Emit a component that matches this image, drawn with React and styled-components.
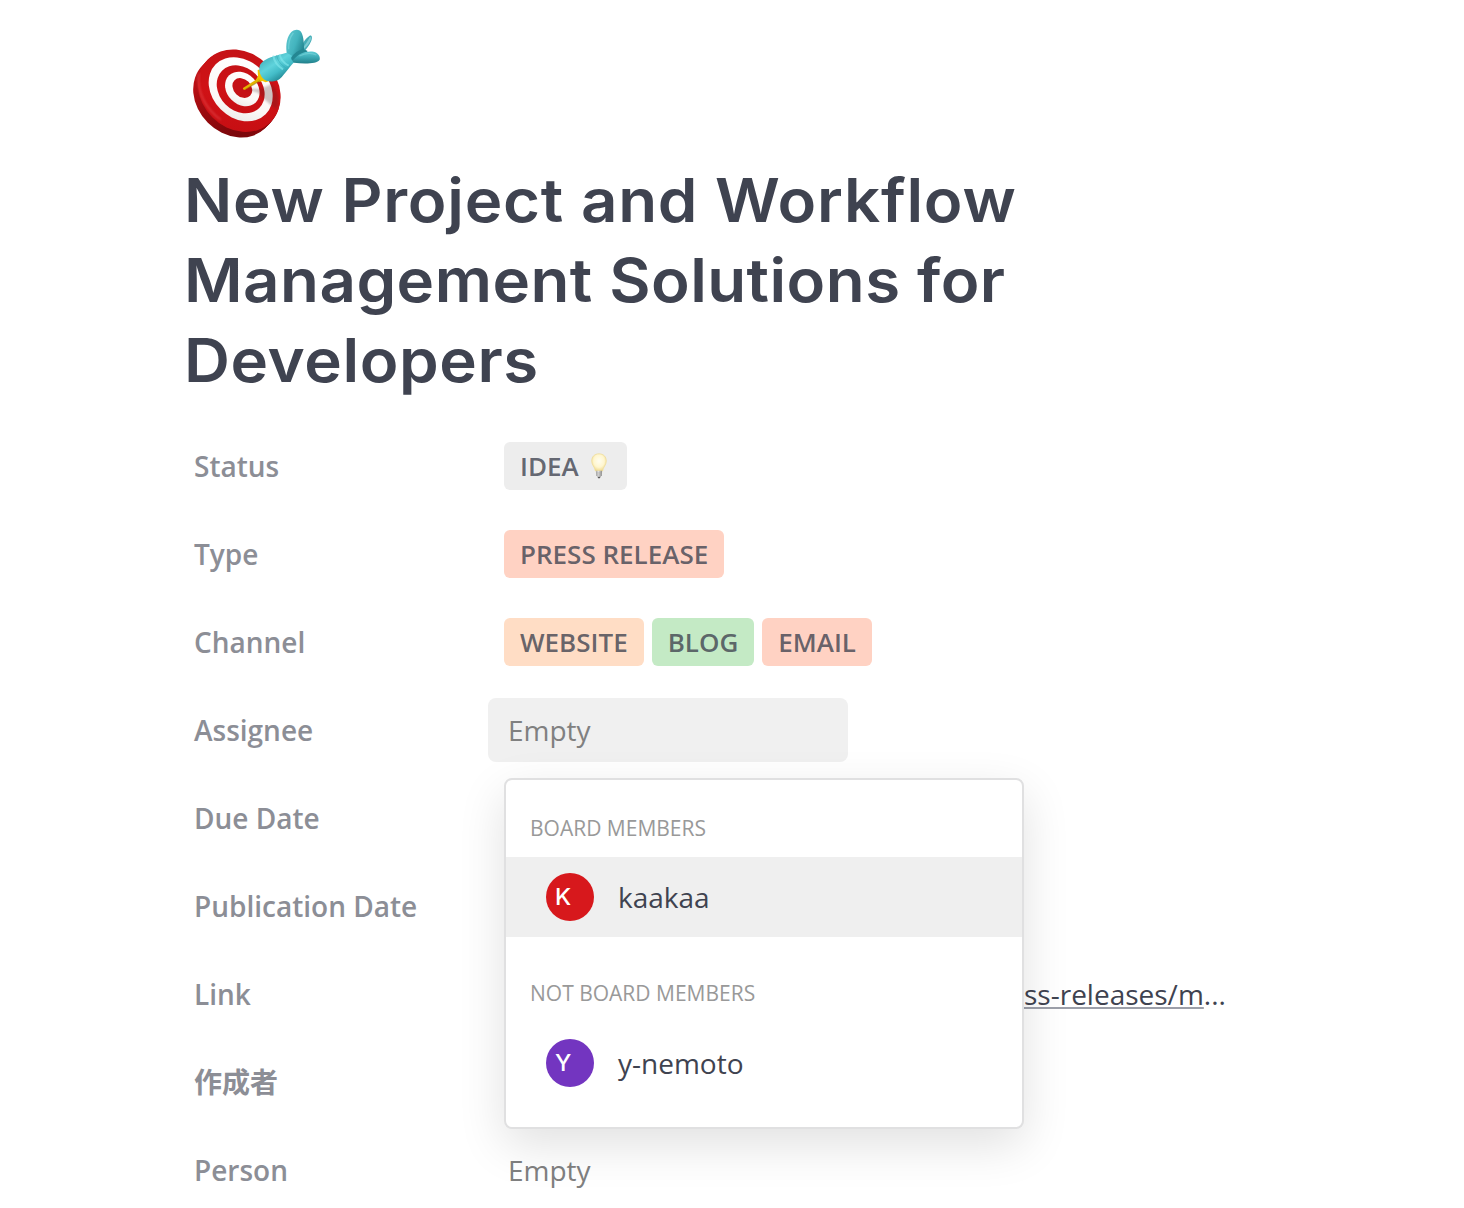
import React from "react";
import styled, { createGlobalStyle } from "styled-components";

const GlobalStyle = createGlobalStyle`
  *, *::before, *::after { box-sizing: border-box; }
  body {
    margin: 0;
    background: #ffffff;
    color: #3f4350;
    font-family: "Open Sans", "Noto Sans CJK JP", sans-serif;
    overflow: hidden;
  }
`;

const Card = styled.main`
  height: 1208px;
  padding: 20px 186px 0;
  overflow: hidden;
`;

const CardIcon = styled.div`
  display: flex;
  margin: 0 0 10px -6px;
`;

const Title = styled.h1`
  display: flex;
  flex-direction: column;
  margin: 0 0 34px;
  font: 600 60px/80px Inter, sans-serif;
  color: #3f4350;
`;

const TitleLine = styled.span`
  margin-left: -2.3px;
  white-space: nowrap;
  letter-spacing: ${(p) => p.$tracking}px;
  transform: scaleX(1.06);
  transform-origin: 0 50%;
`;

const Properties = styled.section`
  display: flex;
  flex-direction: column;
  gap: 24px;
`;

const Property = styled.div`
  display: flex;
  align-items: center;
  height: 64px;
`;

const Label = styled.div`
  flex: 0 0 302px;
  padding-left: 8px;
  font-size: 28px;
  line-height: 38px;
  font-weight: 600;
  color: #8c8e96;
`;

const Value = styled.div`
  position: relative;
  display: flex;
  align-items: center;
  gap: 8px;
  height: 64px;
  padding: 0 16px;
`;

const Tag = styled.span`
  display: inline-flex;
  align-items: center;
  gap: 7px;
  height: 48px;
  padding: 0 16px;
  border-radius: 6px;
  background: ${(p) => p.$bg};
  color: rgba(63, 67, 80, 0.8);
  font-size: 26px;
  line-height: 36px;
  font-weight: 600;
  white-space: nowrap;
`;

const PersonField = styled.div`
  width: 360px;
  height: 64px;
  margin-left: -16px;
  padding-left: 20px;
  border-radius: 8px;
  background: ${(p) => (p.$active ? "#f0f0f0" : "transparent")};
  color: #808080;
  font-size: 28px;
  line-height: 64px;
`;

const Menu = styled.div`
  position: absolute;
  z-index: 2;
  top: 80px;
  left: 16px;
  width: 520px;
  height: 351px;
  padding: 8px 0 24px;
  display: flex;
  flex-direction: column;
  gap: 16px;
  border: 2px solid #e0e0e1;
  border-radius: 8px;
  background: #ffffff;
  box-shadow: 0 16px 48px rgba(0, 0, 0, 0.12);
`;

const MenuGroup = styled.div`
  display: flex;
  flex-direction: column;
`;

const GroupHeading = styled.div`
  height: 69px;
  padding: 26px 24px 0;
  color: #999999;
  font-size: 21px;
  line-height: 29px;

  ${MenuGroup} + ${MenuGroup} > & {
    height: 70px;
  }
`;

const Option = styled.div`
  display: flex;
  align-items: center;
  gap: 24px;
  height: 80px;
  padding-left: 40px;
  background: ${(p) => (p.$focused ? "#efefef" : "transparent")};
  font-size: 28px;
  line-height: 38px;
`;

const OptionName = styled.span`
  display: block;
`;

const Avatar = styled.span`
  width: 48px;
  height: 48px;
  padding-left: 9px;
  border-radius: 50%;
  background: ${(p) => p.$bg};
  color: #ffffff;
  font: 500 23.5px/48px Inter, sans-serif;
`;

const LinkValue = styled.div`
  margin-left: 520px;
  font-size: 28px;
  line-height: 38px;
  color: #3f4350;
  white-space: nowrap;
`;

const Url = styled.a`
  color: inherit;
  text-decoration: underline;
  text-decoration-color: #9c9fa9;
  text-decoration-thickness: 2px;
  text-decoration-skip-ink: none;
  text-underline-offset: 2px;
`;

function DartIcon() {
  return (
    <svg width="150" height="130" viewBox="0 0 450 390" aria-hidden="true">
      <defs>
        <linearGradient id="side" x1="40" y1="120" x2="230" y2="350" gradientUnits="userSpaceOnUse">
          <stop offset="0" stopColor="#cf1a1e" />
          <stop offset="0.5" stopColor="#b80f14" />
          <stop offset="0.85" stopColor="#8f090d" />
          <stop offset="1" stopColor="#6e0609" />
        </linearGradient>
        <linearGradient id="face" x1="0" y1="0" x2="1" y2="1">
          <stop offset="0" stopColor="#c01216" />
          <stop offset="0.5" stopColor="#d01216" />
          <stop offset="1" stopColor="#c30d12" />
        </linearGradient>
        <linearGradient id="ring" x1="0.2" y1="0" x2="0.9" y2="1">
          <stop offset="0" stopColor="#ffffff" />
          <stop offset="0.7" stopColor="#fbf8f6" />
          <stop offset="1" stopColor="#e8e5e3" />
        </linearGradient>
        <linearGradient id="body" x1="262" y1="108" x2="305" y2="175" gradientUnits="userSpaceOnUse">
          <stop offset="0" stopColor="#46b3be" />
          <stop offset="0.4" stopColor="#5fd3dc" />
          <stop offset="0.7" stopColor="#43bcc8" />
          <stop offset="1" stopColor="#258c98" />
        </linearGradient>
        <linearGradient id="fin" x1="318" y1="50" x2="376" y2="72" gradientUnits="userSpaceOnUse">
          <stop offset="0" stopColor="#5cc5ce" />
          <stop offset="0.55" stopColor="#43b4be" />
          <stop offset="1" stopColor="#238590" />
        </linearGradient>
        <linearGradient id="finSide" x1="0" y1="0" x2="0" y2="1">
          <stop offset="0" stopColor="#5dcbd4" />
          <stop offset="0.5" stopColor="#3aa9b4" />
          <stop offset="1" stopColor="#217f8a" />
        </linearGradient>
        <filter id="soft" x="-30%" y="-30%" width="160%" height="160%">
          <feGaussianBlur stdDeviation="3" />
        </filter>
      </defs>
      <g fill="url(#side)">
        <ellipse cx="162" cy="230" rx="133" ry="111" transform="rotate(45 162 230)" />
        <ellipse cx="167" cy="225" rx="133" ry="112" transform="rotate(45 167 225)" />
        <ellipse cx="172" cy="220" rx="133" ry="112" transform="rotate(45 172 220)" />
        <ellipse cx="177" cy="214" rx="133" ry="113" transform="rotate(45 177 214)" />
      </g>
      <ellipse cx="178" cy="212" rx="133" ry="114" transform="rotate(45 178 212)" fill="url(#face)" />
      <path d="M56 160c-6 52 18 104 66 139" fill="none" stroke="#ee6466" strokeWidth="4" opacity=".55" filter="url(#soft)" />
      <ellipse cx="182" cy="208" rx="106" ry="85" transform="rotate(45 182 208)" fill="url(#ring)" />
      <ellipse cx="182" cy="208" rx="79" ry="64" transform="rotate(45 182 208)" fill="url(#face)" />
      <ellipse cx="187" cy="207" rx="57" ry="46" transform="rotate(45 187 207)" fill="url(#ring)" />
      <ellipse cx="187" cy="204" rx="33" ry="26" transform="rotate(45 187 204)" fill="#c51015" />
      <path d="M195 206l44 1 37-15c18 18 25 47 14 75-18-10-43-36-56-49z" fill="#4c2022" opacity=".26" filter="url(#soft)" />
      <path d="M233 150l9-2 24 36-9 3-10-4-9 3-11-5 7-12z" fill="#f2c500" />
      <path d="M190 203l46-29 6 7-47 28c-5 2-8-3-5-6z" fill="#e4b500" />
      <path d="M195 207l44-26 3 3-43 24z" fill="#987000" opacity=".5" />
      <path d="M362 92c2-18 11-34 27-45 7-2 9 6 5 15-6 14-15 27-26 35z" fill="#45adb7" />
      <path d="M368 84c7-9 14-19 22-34l5 3c-6 16-14 27-24 34z" fill="#7ccbd2" />
      <path d="M241 133c12-16 34-23 54-28 17-4 28-7 40-12l14 14-5 18c-15 13-27 35-45 52-12 10-40 11-52-4-9-11-12-26-6-40z" fill="url(#body)" />
      <path d="M280 107c2 16 13 31 29 41M299 103c2 14 12 26 27 34" fill="none" stroke="#7de4e9" strokeWidth="6" opacity=".7" />
      <path d="M290 105c2 15 12 29 27 38" fill="none" stroke="#2e9aa6" strokeWidth="3" opacity=".4" />
      <path d="M320 98c-4-25 2-50 14-62 12-10 26-8 31 3 6 12 7 34 7 49-10 8-21 14-31 22z" fill="url(#fin)" />
      <path d="M326 88c-1-20 4-37 14-49" fill="none" stroke="#86dfe4" strokeWidth="4" opacity=".5" />
      <path d="M334 112c8-13 21-21 36-25l13 6-17 20-23 12c-6-2-11-7-9-13z" fill="#248792" />
      <path d="M339 121c14-20 40-30 62-26 14 4 20 14 18 24-8 13-48 13-77 9-4-2-5-4-3-7z" fill="url(#finSide)" />
      <path d="M358 108c18-9 36-10 51-3" fill="none" stroke="#84dae0" strokeWidth="4" opacity=".5" />
    </svg>
  );
}

function BulbIcon() {
  return (
    <svg width="25" height="36" viewBox="0 0 25 36" aria-hidden="true">
      <defs>
        <radialGradient id="glass" cx="0.5" cy="0.42" r="0.6">
          <stop offset="0" stopColor="#fffdf0" />
          <stop offset="0.6" stopColor="#fff6cf" />
          <stop offset="1" stopColor="#efd889" />
        </radialGradient>
        <linearGradient id="base" x1="0" y1="0" x2="1" y2="0">
          <stop offset="0" stopColor="#a5a5a3" />
          <stop offset="0.4" stopColor="#e1e0df" />
          <stop offset="1" stopColor="#8d8d8c" />
        </linearGradient>
      </defs>
      <path d="M13 5.800c4.500 0 7.300 3 7.300 7.100 0 4.400-3.200 5.900-3.700 10.100H9.400C8.900 18.800 5.700 17.300 5.700 12.900c0-4.100 2.800-7.100 7.300-7.100z" fill="url(#glass)" stroke="#eedb96" strokeWidth=".7" />
      <path d="M9.900 22.800h6.200l-.2 4.500-1.500 1.700h-2.800l-1.500-1.700z" fill="url(#base)" />
      <path d="M10.100 25h5.800M10.300 27h5.400" stroke="#9b9a99" strokeWidth=".5" />
      <path d="M11.500 28.700h3l-.6 1.500h-1.800z" fill="#5c5b5b" />
    </svg>
  );
}

function PropertyRow({ label, children }) {
  return (
    <Property>
      <Label>{label}</Label>
      <Value>{children}</Value>
    </Property>
  );
}

function Person({ initial, color, name, focused }) {
  return (
    <Option $focused={focused}>
      <Avatar $bg={color}>{initial}</Avatar>
      <OptionName>{name}</OptionName>
    </Option>
  );
}

export default function App() {
  return (
    <>
      <GlobalStyle />
      <Card>
        <CardIcon>
          <DartIcon />
        </CardIcon>
        <Title>
          <TitleLine $tracking={0.72}>New Project and Workflow</TitleLine>
          <TitleLine $tracking={0.42}>Management Solutions for</TitleLine>
          <TitleLine $tracking={0.55}>Developers</TitleLine>
        </Title>
        <Properties>
          <PropertyRow label="Status">
            <Tag $bg="#ededed">IDEA <BulbIcon /></Tag>
          </PropertyRow>
          <PropertyRow label="Type">
            <Tag $bg="#ffd2c3">PRESS RELEASE</Tag>
          </PropertyRow>
          <PropertyRow label="Channel">
            <Tag $bg="#ffddc5">WEBSITE</Tag>
            <Tag $bg="#c4eac5">BLOG</Tag>
            <Tag $bg="#ffd2c3">EMAIL</Tag>
          </PropertyRow>
          <PropertyRow label="Assignee">
            <PersonField $active>Empty</PersonField>
            <Menu>
              <MenuGroup>
                <GroupHeading>BOARD MEMBERS</GroupHeading>
                <Person initial="K" color="#d7181c" name="kaakaa" focused />
              </MenuGroup>
              <MenuGroup>
                <GroupHeading>NOT BOARD MEMBERS</GroupHeading>
                <Person initial="Y" color="#7335c0" name="y-nemoto" />
              </MenuGroup>
            </Menu>
          </PropertyRow>
          <PropertyRow label="Due Date" />
          <PropertyRow label="Publication Date" />
          <PropertyRow label="Link">
            <LinkValue><Url>ss-releases/m</Url>...</LinkValue>
          </PropertyRow>
          <PropertyRow label="作成者" />
          <PropertyRow label="Person">
            <PersonField>Empty</PersonField>
          </PropertyRow>
        </Properties>
      </Card>
    </>
  );
}
